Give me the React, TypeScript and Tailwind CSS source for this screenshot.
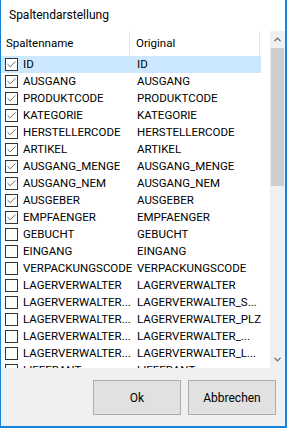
import { Check, ChevronUp, ChevronDown } from "lucide-react";

type Row = { name: string; original: string; checked: boolean };

const ROWS: Row[] = [
  { name: "ID", original: "ID", checked: true },
  { name: "AUSGANG", original: "AUSGANG", checked: true },
  { name: "PRODUKTCODE", original: "PRODUKTCODE", checked: true },
  { name: "KATEGORIE", original: "KATEGORIE", checked: true },
  { name: "HERSTELLERCODE", original: "HERSTELLERCODE", checked: true },
  { name: "ARTIKEL", original: "ARTIKEL", checked: true },
  { name: "AUSGANG_MENGE", original: "AUSGANG_MENGE", checked: true },
  { name: "AUSGANG_NEM", original: "AUSGANG_NEM", checked: true },
  { name: "AUSGEBER", original: "AUSGEBER", checked: true },
  { name: "EMPFAENGER", original: "EMPFAENGER", checked: true },
  { name: "GEBUCHT", original: "GEBUCHT", checked: false },
  { name: "EINGANG", original: "EINGANG", checked: false },
  { name: "VERPACKUNGSCODE", original: "VERPACKUNGSCODE", checked: false },
  { name: "LAGERVERWALTER", original: "LAGERVERWALTER", checked: false },
  { name: "LAGERVERWALTER...", original: "LAGERVERWALTER_S...", checked: false },
  { name: "LAGERVERWALTER...", original: "LAGERVERWALTER_PLZ", checked: false },
  { name: "LAGERVERWALTER...", original: "LAGERVERWALTER_...", checked: false },
  { name: "LAGERVERWALTER...", original: "LAGERVERWALTER_L...", checked: false },
  { name: "LIEFERANT", original: "LIEFERANT", checked: false },
];

function CheckBox({ checked }: { checked: boolean }) {
  return (
    <span className="w-[13px] h-[13px] shrink-0 border border-[#333333] bg-white flex items-center justify-center">
      {checked && <Check className="w-[11px] h-[11px] text-[#333333]" strokeWidth={1.6} />}
    </span>
  );
}

export default function App() {
  return (
    <div className="w-[287px] h-[428px] flex flex-col bg-[#f0f0f0] border-l border-r-2 border-b-2 border-[#1883d7] font-['Roboto','Liberation_Sans',sans-serif] text-[11.5px] text-black overflow-hidden">
      {/* Title */}
      <div className="h-[31px] shrink-0 bg-white flex items-center pl-[8px] pb-[1px] text-[12px]">Spaltendarstellung</div>

      {/* List + scrollbar */}
      <div className="h-[337px] shrink-0 flex">
        <div className="flex-1 bg-white flex flex-col overflow-hidden">
          <div className="h-[25px] shrink-0 flex">
            <div className="w-[129px] border-r border-[#e5e5e5] flex items-center pl-[5px]">Spaltenname</div>
            <div className="w-[130px] border-r border-[#e5e5e5] flex items-center pl-[6px]">Original</div>
          </div>
          <div className="flex flex-col">
            {ROWS.map((r, i) => (
              <div key={i} className={`h-[17px] shrink-0 flex items-center w-[260px] ${i === 0 ? "bg-[#cce8ff]" : ""}`}>
                <div className="w-[131px] flex items-center gap-[5px] pl-[4px] whitespace-nowrap overflow-hidden">
                  <CheckBox checked={r.checked} />
                  <span>{r.name}</span>
                </div>
                <div className="w-[129px] pl-[5px] whitespace-nowrap overflow-hidden">{r.original}</div>
              </div>
            ))}
          </div>
        </div>
        <div className="w-[15px] shrink-0 bg-[#f0f0f0] flex flex-col items-center">
          <div className="h-[17px] flex items-center justify-center text-[#606060]">
            <ChevronUp className="w-[11px] h-[11px]" strokeWidth={2.5} />
          </div>
          <div className="w-[13px] h-[138px] bg-[#cdcdcd]" />
          <div className="flex-1" />
          <div className="h-[17px] flex items-center justify-center text-[#606060]">
            <ChevronDown className="w-[11px] h-[11px]" strokeWidth={2.5} />
          </div>
        </div>
      </div>

      {/* Buttons */}
      <div className="flex-1 flex items-start justify-end gap-[7px] pt-[12px] pr-[9px]">
        <button className="w-[88px] h-[35px] bg-[#e1e1e1] border border-[#adadad] text-[12px]">Ok</button>
        <button className="w-[88px] h-[35px] bg-[#e1e1e1] border border-[#adadad] text-[12px]">Abbrechen</button>
      </div>
    </div>
  );
}
